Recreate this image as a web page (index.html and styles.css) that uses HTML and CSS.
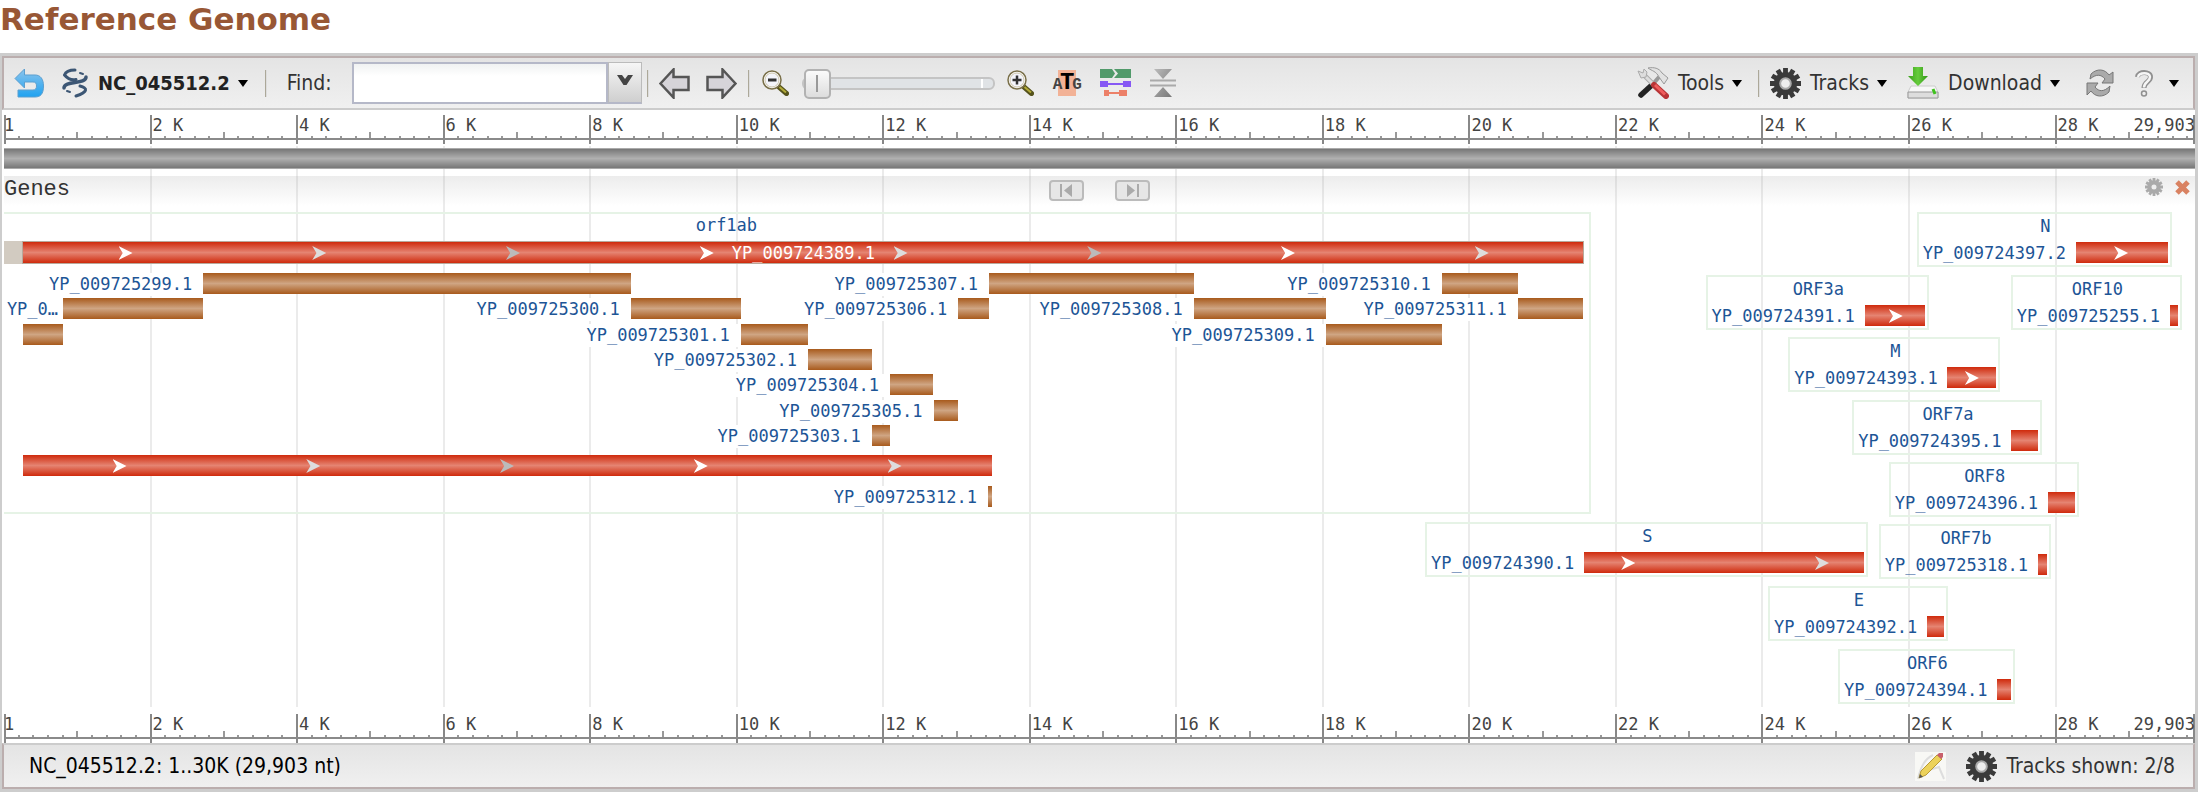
FILE: index.html
```html
<!DOCTYPE html>
<html lang="en">
<head>
<meta charset="utf-8">
<title>Reference Genome</title>
<link rel="stylesheet" href="styles.css">
</head>
<body>
<svg class="defs" aria-hidden="true">
  <defs>
    <linearGradient id="blue" x1="0" y1="0" x2="0" y2="1"><stop offset="0" stop-color="#8cc4ec"/><stop offset="1" stop-color="#1fa2f0"/></linearGradient>
    <linearGradient id="green" x1="0" y1="0" x2="1" y2="0"><stop offset="0" stop-color="#3aa01c"/><stop offset=".5" stop-color="#66cc3c"/><stop offset="1" stop-color="#2e9415"/></linearGradient>
    <linearGradient id="steel" x1="0" y1="0" x2="1" y2="1"><stop offset="0" stop-color="#bbb"/><stop offset="1" stop-color="#777"/></linearGradient>
    <symbol id="gear" viewBox="0 0 32 32">
      <g stroke="currentColor" stroke-width="5"><path d="M16 0V32M2.100 8L29.900 24M2.100 24L29.900 8M8 2.100L24 29.900M24 2.100L8 29.900M0 16H32"/></g>
      <circle cx="16" cy="16" r="12" fill="currentColor"/>
      <circle cx="16" cy="16" r="5.500" fill="#eee" stroke="#aaa" stroke-width="2"/>
    </symbol>
  </defs>
</svg>

<h1 class="title">Reference Genome</h1>

<main class="viewer">
  <div class="toolbar">
    <button class="tool undo" aria-label="Go back"><svg width="30" height="30" viewBox="0 0 30 30"><path d="M10.500 1V7H21C26.500 7 29.500 11 29.500 18C29.500 26 26.500 29 21 29H4V22H19C21.500 22 22.500 20.500 22.500 18C22.500 15 21.500 14 19 14H10.500V20L1 10.500Z" fill="url(#blue)" stroke="#5b9fd0"/></svg></button>
    <button class="tool sequence"><svg width="26" height="30" viewBox="0 0 26 30" fill="none" stroke="#3c5674" stroke-width="3" stroke-linecap="round"><path d="M2.500 7C4 3 8 2 13 2M2.500 7C5 10 9 12.500 14 11.500" /><path d="M24 9C24 17 2 12 2 20" stroke-width="3.500"/><path d="M18 5L21 6M8 24L5 23" stroke-width="2"/><path d="M18 18C26 20 26 24 14 28" /></svg><span class="sequence-name">NC_045512.2</span><i class="caret"></i></button>
    <i class="divider"></i>
    <label class="find-label" for="find">Find:</label>
    <div class="combo"><input id="find" class="find" type="text"><button class="combo-trigger" aria-label="Show searches"><svg width="18" height="13" viewBox="0 0 18 13"><path d="M1 1H6L9 5L12 1H17L10.500 11H7.500Z" fill="#444"/></svg></button></div>
    <i class="divider near"></i>
    <button class="tool pan" aria-label="Pan left"><svg width="31" height="31" viewBox="0 0 31 31"><path d="M1.500 15.500L14.500 1.500V9H29.500V22H14.500V29.500Z" fill="#d6d4d9" stroke="#555" stroke-width="2.500"/></svg></button>
    <button class="tool pan-right" aria-label="Pan right"><svg width="31" height="31" viewBox="0 0 31 31"><path d="M29.500 15.500L16.500 1.500V9H1.500V22H16.500V29.500Z" fill="#d6d4d9" stroke="#555" stroke-width="2.500"/></svg></button>
    <i class="divider mid"></i>
    <button class="tool zoom-out" aria-label="Zoom out"><svg width="27" height="26" viewBox="0 0 27 26"><path d="M17 17L24.500 23.500" stroke="#55521c" stroke-width="5" stroke-linecap="round"/><path d="M17.500 17L24 22.500" stroke="#b2aa37" stroke-width="2"/><circle cx="10" cy="10" r="9" fill="#fff" stroke="#7a704a" stroke-width="1.500"/><circle cx="10" cy="10" r="7" fill="#f4f5fb" stroke="#cdc6ad" stroke-width="1"/><path d="M6 10H14.500" stroke="#333" stroke-width="3"/></svg></button>
    <input class="zoom-slider" type="range" min="0" max="100" value="0" aria-label="Zoom level">
    <button class="tool zoom-in" aria-label="Zoom in"><svg width="27" height="26" viewBox="0 0 27 26"><path d="M17 17L24.500 23.500" stroke="#55521c" stroke-width="5" stroke-linecap="round"/><path d="M17.500 17L24 22.500" stroke="#b2aa37" stroke-width="2"/><circle cx="10" cy="10" r="9" fill="#fff" stroke="#7a704a" stroke-width="1.500"/><circle cx="10" cy="10" r="7" fill="#f4f5fb" stroke="#cdc6ad" stroke-width="1"/><path d="M5.500 10H14.500M10 5.500V14.500" stroke="#333" stroke-width="2.500"/></svg></button>
    <button class="tool atg" aria-label="Zoom to sequence"><span class="atg-side">A</span><span class="atg-mid">T</span><span class="atg-side">G</span></button>
    <button class="tool layout" aria-label="Track layout"><svg width="31" height="28" viewBox="0 0 31 28"><path d="M0 0H12L15 4.500L12 9H0ZM14 0H31V9H14L18 4.500Z" fill="#519a6a"/><path d="M7 15H24" stroke="#8658f4" stroke-width="2"/><path d="M0 12H8V18H0ZM23 12H31V18H23Z" fill="#8658f4"/><path d="M8 24H22" stroke="#ec8068" stroke-width="2"/><path d="M4 21H9V27H4ZM19 21H27V27H19Z" fill="#ec8068"/></svg></button>
    <button class="tool collapse" aria-label="Collapse"><svg width="26" height="28" viewBox="0 0 26 28"><path d="M4 0H22L13 10ZM4 28H22L13 18Z" fill="url(#steel)"/><path d="M0 11.500H26M0 16.500H26" stroke="#aaa" stroke-width="2"/></svg></button>

    <div class="menus">
      <button class="tool"><svg width="32" height="32" viewBox="0 0 32 32"><path d="M4 28L16 17" stroke="#222" stroke-width="5.500" stroke-linecap="round"/><path d="M16 17L22 10" stroke="#999" stroke-width="4"/><path d="M11 1C17 0 22 1 25 6L31 11L27 17L22 10C19 4 15 4 11 1Z" fill="#e2e2e2" stroke="#999"/><path d="M7 8L18 19" stroke="#aaa" stroke-width="5"/><path d="M7 8L18 19" stroke="#ddd" stroke-width="3"/><path d="M1 4L6 6L7 2L10 5L9 10L4 11Z" fill="#ddd" stroke="#aaa"/><path d="M17 18L29 29" stroke="#b83436" stroke-width="6" stroke-linecap="round"/><path d="M18 18L28 27.500" stroke="#f05c5c" stroke-width="3"/></svg><span class="menu-name">Tools</span><i class="caret"></i></button>
      <i class="divider menu-divider"></i>
      <button class="tool tracks-menu"><svg class="gear" width="31" height="31"><use href="#gear"/></svg><span class="menu-name">Tracks</span><i class="caret"></i></button>
      <button class="tool download"><svg width="32" height="32" viewBox="0 0 32 32"><path d="M4 19H28L31 25V31H1V25Z" fill="#f7f7f7" stroke="#ccc"/><path d="M1 25H31V31H1Z" fill="#ddd" stroke="#999"/><path d="M26 22L28 27" stroke="#3fc21e" stroke-width="3"/><path d="M6 0H16V9H21L11 19L1 9H6Z" fill="url(#green)"/></svg><span class="menu-name">Download</span><i class="caret"></i></button>
      <button class="tool refresh" aria-label="Reload"><svg width="28" height="28" viewBox="0 0 28 28" fill="#aaa" stroke="#777"><path d="M5 5C11 -1 19 0 23 6L27 3V14H16L19 10C15 5 10 5 4 10Z"/><path d="M23 23C17 29 9 28 5 22L1 26V14H12L9 18C13 23 18 23 24 17Z"/></svg></button>
      <button class="tool help" aria-label="Help"><svg width="18" height="27" viewBox="0 0 18 27" fill="none"><path d="M2.500 7C3 1 15.500 1 15.500 7C15.500 12 9 11.500 9 18" stroke="#909090" stroke-width="5"/><path d="M3 7C4 2 15 2 15 7C15 12 9 11.500 9 17.500" stroke="#f6f6f6" stroke-width="2.500"/><circle cx="9" cy="23.500" r="2.500" fill="#eee" stroke="#909090" stroke-width="1.500"/></svg><i class="caret"></i></button>
    </div>
  </div>

  <section class="canvas" aria-label="Sequence map">
    <div class="grid" data-grid></div>
    <div class="ruler" data-ruler></div>
    <div class="sequence-bar"></div>
    <header class="track-header">
      <span class="track-name">Genes</span>
      <div class="track-nav">
        <button class="nav" aria-label="Previous gene"><svg width="13" height="13" viewBox="0 0 13 13"><path d="M0 0H2V13H0ZM12 0V13L4 6.500Z" fill="#aaa"/></svg></button>
        <button class="nav" aria-label="Next gene"><svg width="13" height="13" viewBox="0 0 13 13"><path d="M13 0H11V13H13ZM1 0V13L9 6.500Z" fill="#aaa"/></svg></button>
      </div>
      <div class="track-actions">
        <button class="tool" aria-label="Track settings"><svg class="gear-light" width="18" height="18"><use href="#gear"/></svg></button>
        <button class="tool" aria-label="Close track"><svg width="15" height="15" viewBox="0 0 15 15"><path d="M2 2L13 13M13 2L2 13" stroke="#d98262" stroke-width="5"/></svg></button>
      </div>
    </header>
    <div class="track" data-track></div>
    <div class="ruler" data-ruler></div>
  </section>

  <footer class="status">
    <span class="range">NC_045512.2: 1..30K (29,903 nt)</span>
    <div class="status-side">
      <svg width="31" height="29" viewBox="0 0 31 29"><path d="M0 0H31V29H0Z" fill="#f8f8f5"/><path d="M3 27C5 17 9 7 18 3M14 18L24 15L29 27" fill="none" stroke="#ddd" stroke-width="2"/><path d="M4 26L6 19L22 3L27 7L11 23Z" fill="#ecd25a" stroke="#b89a35"/><path d="M22 3L24 1H28V5L26 7Z" fill="#c8606c"/><path d="M4 26L5 22L8 25Z" fill="#555"/></svg>
      <svg class="gear" width="31" height="31"><use href="#gear"/></svg>
      <span class="shown">Tracks shown: 2/8</span>
    </div>
  </footer>
</main>
<script src="map.js"></script>
</body>
</html>
```
FILE: styles.css
```css
* { box-sizing: border-box; }

body {
  margin: 0;
  background: #fff;
  color: #333;
  font: 21px/24px "DejaVu Sans Condensed", "DejaVu Sans", sans-serif;
}

.defs { position: absolute; width: 0; height: 0; }

.title {
  margin: 0;
  padding: 1px 0 16px;
  color: #985735;
  font: bold 31px/36px "DejaVu Sans", sans-serif;
}

.viewer {
  margin-right: 3px;
  border: 3px solid #cdcdcd;
  border-width: 3px 3px 3px 2px;
}

button { font: inherit; color: inherit; cursor: pointer; }

.toolbar {
  display: flex;
  align-items: center;
  height: 54px;
  padding: 0 14px 0 10px;
  border: 2px solid #bbaeae;
  border-bottom-color: #ccc;
  background: linear-gradient(#e4e4e4, #f0f0f0);
}

.tool {
  display: flex;
  align-items: center;
  flex: none;
  padding: 0;
  border: 0;
  background: none;
}

.caret {
  border: 5px solid transparent;
  border-top: 7px solid #000;
  border-bottom: 0;
  margin-left: 8px;
}

.sequence { margin-left: 18px; }
.sequence-name { margin-left: 10px; color: #222; font-size: 20px; font-weight: bold; }

.divider {
  flex: none;
  width: 2px;
  height: 27px;
  margin-left: 17px;
  background: #aca899;
  border-right: 1px solid #ddd;
}
.divider.near { margin-left: 5px; }
.divider.mid { margin-left: 11px; }

.find-label { margin-left: 20px; }

.combo { display: flex; margin-left: 20px; }
.find {
  width: 256px;
  height: 42px;
  border: 2px solid #b5b8c8;
  background: linear-gradient(#f0f2f2, #fff 12px);
  font: inherit;
}
.combo-trigger {
  display: flex;
  align-items: center;
  justify-content: center;
  width: 34px;
  padding: 0 0 4px;
  border: 1px solid #bbb;
  border-bottom: 2px solid #b5b8c8;
  background: linear-gradient(#f6f6f6, #cfcfcf);
}

.pan { margin-left: 10px; }
.pan-right { margin-left: 16px; }
.zoom-out { margin-left: 12px; }
.zoom-in { margin-left: 12px; }

.zoom-slider {
  width: 193px;
  height: 30px;
  margin: 0 0 0 13px;
  appearance: none;
  background: none;
}
.zoom-slider::-webkit-slider-runnable-track {
  height: 13px;
  border: 2px solid #c4c4c4;
  border-radius: 6px;
  background: linear-gradient(#fff, #fff) right 10px top / 2px 9px no-repeat #e0e3e6;
}
.zoom-slider::-webkit-slider-thumb {
  appearance: none;
  width: 27px;
  height: 30px;
  margin-top: -10px;
  border: 2px solid #b2b2b2;
  border-radius: 5px;
  background: linear-gradient(#999, #999) center / 2px 17px no-repeat, linear-gradient(#fafafa, #ddd);
}

.atg {
  margin-left: 19px;
  color: #444;
  font: bold 16px/26px "Liberation Mono", monospace;
}
.atg-mid {
  width: 18px;
  margin: 0 -4px;
  background: #f2b296;
  color: #000;
  font-size: 24px;
  text-align: center;
}
.atg-side { position: relative; padding-top: 4px; line-height: 22px; }
.layout { margin-left: 18px; }
.collapse { margin-left: 19px; }

.menus { display: flex; align-items: center; margin-left: auto; }
.menu-name { margin-left: 9px; }
.menu-divider { margin-left: 16px; }
.tracks-menu { margin-left: 10px; }
.download { margin-left: 20px; }
.refresh { margin-left: 26px; }
.help { margin-left: 21px; }
.help .caret { margin-left: 16px; }

.gear { color: #3a3a3a; }
.gear-light { color: #aaa; }

.canvas { position: relative; margin-left: 2px; overflow: hidden; }

.grid { position: absolute; inset: 36px 0; }
.grid-line {
  position: absolute;
  top: 0;
  bottom: 0;
  width: 2px;
  margin-left: -1px;
  background: #ebebeb;
}

.ruler {
  position: relative;
  height: 34px;
  color: #444;
  font: 17px/20px "DejaVu Sans Mono", monospace;
}
.ruler::after {
  content: "";
  position: absolute;
  inset: 28px 0 auto;
  height: 2px;
  background: #8a8a8a;
}
.tick {
  position: absolute;
  bottom: 4px;
  width: 2px;
  height: 4px;
  margin-left: -1px;
  background: #999;
}
.tick.half { height: 8px; }
.tick.major { bottom: 0; height: 29px; background: #888; }
.tick.edge { margin: 0; }
.tick-label { position: absolute; top: 5px; white-space: nowrap; }
.tick-label.first { left: 0; }
.tick-label.last { right: 0; }
.tick .tick-label { top: 0; left: 3px; }

.sequence-bar {
  position: relative;
  height: 21px;
  margin-top: 4px;
  border: solid #aaa;
  border-width: 1px 0;
  background: linear-gradient(#777, #b0b0b0 50%, #777);
}

.track-header {
  position: relative;
  display: grid;
  grid-template-columns: 1fr auto 1fr;
  align-items: start;
  height: 30px;
  margin-top: 7px;
  background: linear-gradient(rgba(150, 150, 150, .18), rgba(255, 255, 255, 0));
}
.track-name { color: #333; font: 22px/28px "Liberation Mono", monospace; }
.track-nav { display: flex; gap: 31px; padding-top: 4px; }
.nav {
  display: flex;
  align-items: center;
  justify-content: center;
  width: 35px;
  height: 21px;
  padding: 0;
  border: 2px solid #bbb;
  border-radius: 4px;
  background: #e6e6e6;
}
.track-actions { display: flex; justify-content: flex-end; gap: 12px; padding: 2px 5px 0 0; }

.track {
  position: relative;
  height: 503px;
  color: #1d5596;
  font: 17px/20px "DejaVu Sans Mono", monospace;
}

.bar { position: absolute; height: 21px; min-width: 4px; }
.bar.cds { background: linear-gradient(#cf2a0c, #e58472 50%, #cf2a0c); }
.bar.peptide { background: linear-gradient(#a85a1c, #cfa583 50%, #a85a1c); }
.bar.frame { outline: 1px solid #b8a99c; }
.lead { position: absolute; left: 0; height: 23px; background: #d2cbc1; }

.bar-label {
  position: absolute;
  padding-right: 11px;
  line-height: 23px;
  background: #fff;
  white-space: nowrap;
}
.bar-label.clipped { padding-right: 5px; }
.over { position: absolute; inset: 0; color: #fff; line-height: 23px; text-align: center; }

.arrow {
  position: absolute;
  top: 4px;
  width: 14px;
  height: 14px;
  background: #fff;
  clip-path: polygon(0 0, 100% 50%, 0 100%, 30% 50%);
}
.arrow.light { background: #ddd; }
.arrow.dim { background: #bbb; }

.span-box { position: absolute; left: 0; border: solid #e6f3e6; border-width: 2px 2px 2px 0; }
.span-name { position: absolute; }

.gene {
  position: absolute;
  height: 55px;
  padding: 2px 2px 0 4px;
  border: 2px solid #e6f3e6;
}
.gene-name { display: block; margin-bottom: 6px; text-align: center; line-height: 20px; }
.gene-row { display: flex; line-height: 23px; }
.gene-id { flex: none; width: 153px; }
.gene-row .bar { position: relative; flex: 1; }

.status {
  display: flex;
  align-items: center;
  justify-content: space-between;
  height: 46px;
  padding: 0 18px 0 25px;
  border: 2px solid #bbaeae;
  border-top-color: #ccc;
  background: linear-gradient(#e4e4e4, #f0f0f0);
}
.range { color: #000; }
.status-side { display: flex; align-items: center; gap: 20px; }
.shown { margin-left: -11px; }
```
FILE: map.js
```js
const LENGTH = 29903;
const pct = (n) => (n / LENGTH) * 100 + '%';

function el(cls, parent, style, text) {
  const node = document.createElement('span');
  node.className = cls;
  Object.assign(node.style, style || {});
  if (text) node.textContent = text;
  parent.appendChild(node);
  return node;
}

// Rulers: a tick each 200 nt, a taller one each 1000, a labelled one each 2000.
document.querySelectorAll('[data-ruler]').forEach((ruler) => {
  el('tick major edge', ruler, { left: '0' });
  el('tick-label first', ruler, {}, '1');
  for (let n = 200; n < LENGTH; n += 200) {
    const kind = n % 2000 === 0 ? ' major' : n % 1000 === 0 ? ' half' : '';
    const tick = el('tick' + kind, ruler, { left: pct(n) });
    if (n % 2000 === 0) el('tick-label', tick, {}, n / 1000 + ' K');
  }
  el('tick major edge', ruler, { right: '0' });
  el('tick-label last', ruler, {}, '29,903');
});

const grid = document.querySelector('[data-grid]');
for (let n = 2000; n < LENGTH; n += 2000) el('grid-line', grid, { left: pct(n) });

const track = document.querySelector('[data-track]');
const SHADES = ['', ' light', ' dim'];
const ARROW_STEP = 193.75 / 2191 * LENGTH;

function bar(kind, from, to, top) {
  return el('bar ' + kind, track, { left: pct(from), width: pct(to - from), top: top + 'px' });
}
function arrows(parent, length, first, count) {
  for (let i = 0; i < count; i++) {
    el('arrow' + SHADES[i % 3], parent, { left: ((first + i * ARROW_STEP) / length) * 100 + '%' });
  }
}

// orf1ab: the gene frame, two coding regions and their mature peptides.
el('span-box', track, { top: '6px', height: '302px', width: pct(21665) });
el('span-name', track, { left: pct(9440), top: '9px' }, 'orf1ab');
el('lead', track, { top: '35px', width: pct(266) });
const long = bar('cds frame', 266, 21555, 36);
arrows(long, 21289, 1297, 8);
el('over', long, {}, 'YP_009724389.1');
arrows(bar('cds', 266, 13483, 249), 13217, 1215, 5);

[
  ['YP_009725299.1', 2720, 8554, 0], ['YP_0…', 806, 2719, 1], ['', 266, 805, 2],
  ['YP_009725300.1', 8555, 10054, 1], ['YP_009725301.1', 10055, 10972, 2],
  ['YP_009725302.1', 10973, 11842, 3], ['YP_009725303.1', 11843, 12091, 6],
  ['YP_009725304.1', 12092, 12685, 4], ['YP_009725305.1', 12686, 13024, 5],
  ['YP_009725306.1', 13025, 13441, 1], ['YP_009725307.1', 13442, 16236, 0],
  ['YP_009725308.1', 16237, 18039, 1], ['YP_009725309.1', 18040, 19620, 2],
  ['YP_009725310.1', 19621, 20658, 0], ['YP_009725311.1', 20659, 21552, 1],
  ['YP_009725312.1', 13430, 13480, 8.4],
].forEach(([id, from, to, row]) => {
  const top = Math.round(67 + row * 25.3);
  if (id) {
    el('bar-label' + (id.length < 6 ? ' clipped' : ''), track,
      { right: pct(LENGTH - from), top: top + 'px' }, id);
  }
  bar('peptide', from, to, top);
});

// The other genes, each a frame with its name, protein and coding region.
[
  ['S', 'YP_009724390.1', 21563, 25384, 316, 510, 2],
  ['ORF3a', 'YP_009724391.1', 25393, 26220, 69, 330, 1],
  ['E', 'YP_009724392.1', 26245, 26472, 380, 0, 0],
  ['M', 'YP_009724393.1', 26523, 27191, 131, 240, 1],
  ['ORF6', 'YP_009724394.1', 27202, 27387, 443, 0, 0],
  ['ORF7a', 'YP_009724395.1', 27394, 27759, 194, 0, 0],
  ['ORF7b', 'YP_009725318.1', 27756, 27887, 318, 0, 0],
  ['ORF8', 'YP_009724396.1', 27894, 28259, 256, 0, 0],
  ['N', 'YP_009724397.2', 28274, 29533, 6, 525, 1],
  ['ORF10', 'YP_009725255.1', 29558, 29674, 69, 0, 0],
].forEach(([name, id, from, to, top, first, count]) => {
  const box = el('gene', track, {
    left: `calc(${pct(from)} - 159px)`,
    width: `calc(${pct(to - from)} + 163px)`,
    top: top + 'px',
  });
  el('gene-name', box, {}, name);
  const row = el('gene-row', box);
  el('gene-id', row, {}, id);
  arrows(el('bar cds', row), to - from, first, count);
});
```
